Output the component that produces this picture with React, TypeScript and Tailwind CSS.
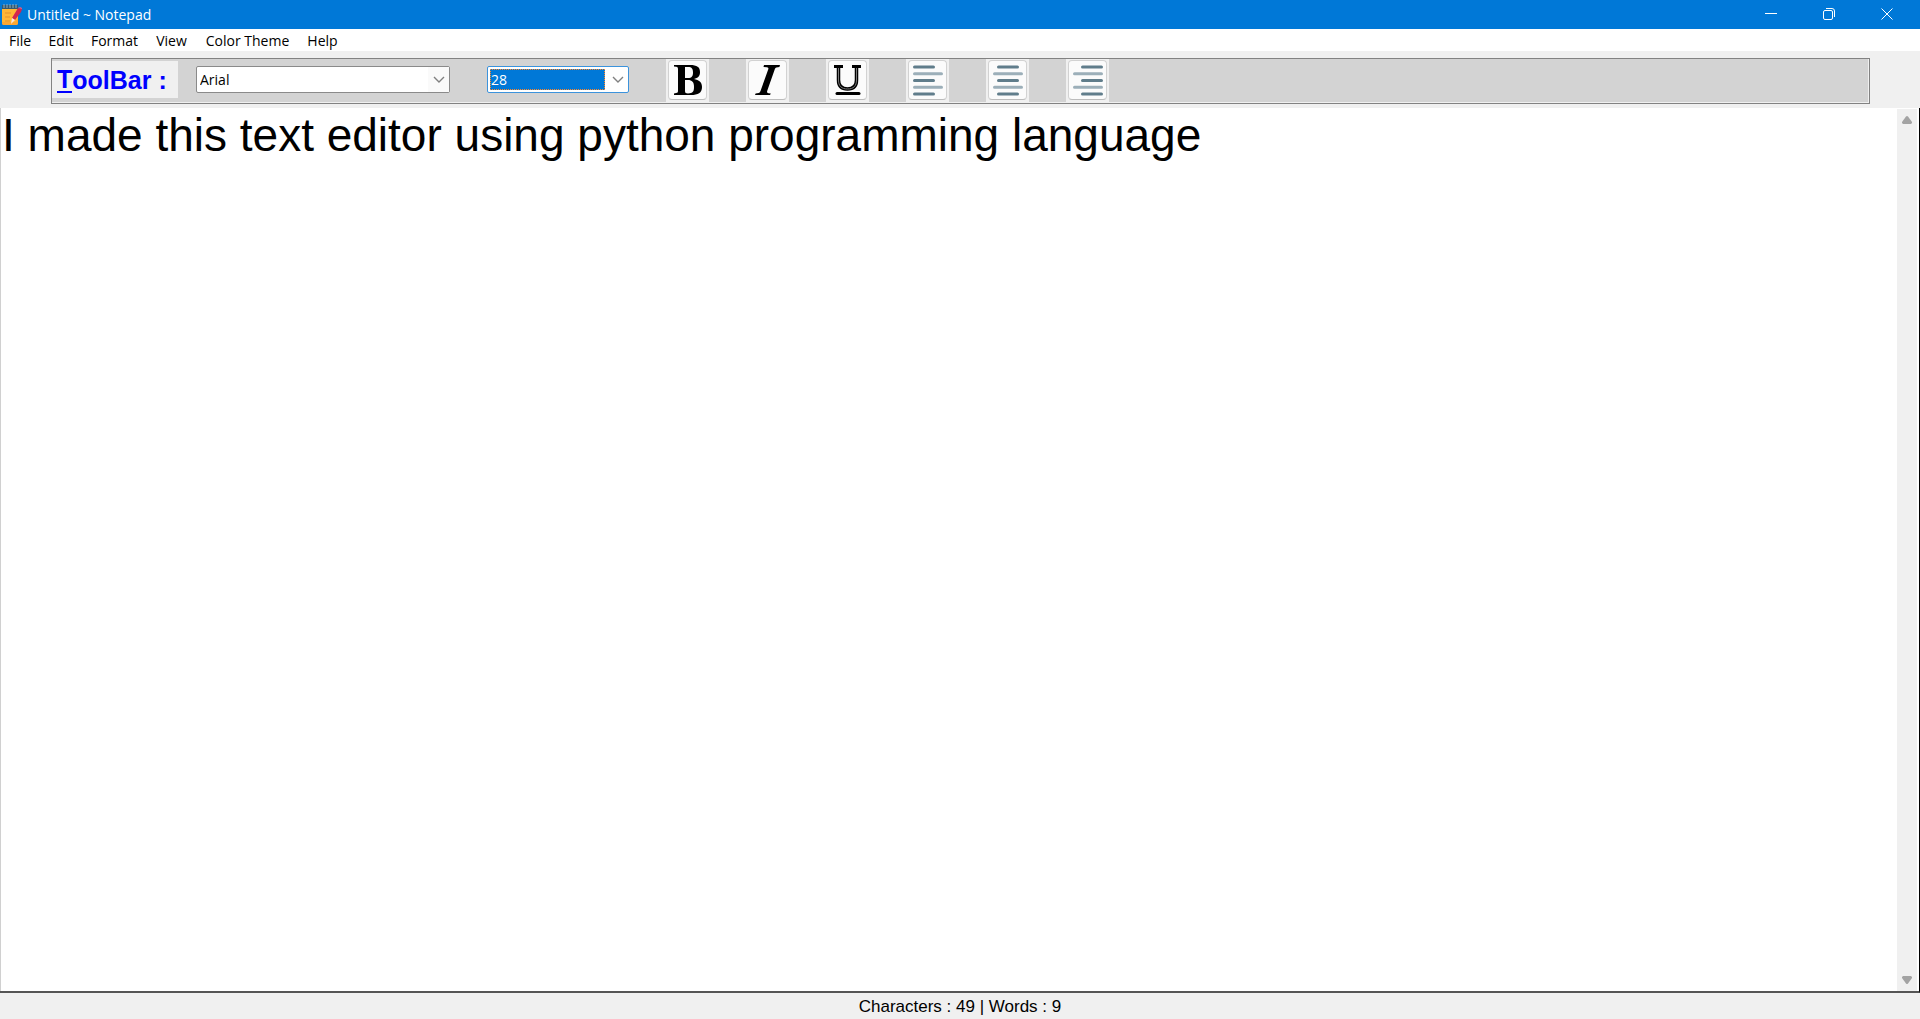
import { useState, type ReactNode } from "react";

const menus = [
  { name: "File", width: "w-10" },
  { name: "Edit", width: "w-[42px]" },
  { name: "Format", width: "w-[65px]" },
  { name: "View", width: "w-[49px]" },
  { name: "Color Theme", width: "w-[103px]" },
  { name: "Help", width: "w-[47px]" },
];

function NotepadIcon() {
  return (
    <svg width="22" height="22" viewBox="0 0 22 22" aria-hidden="true">
      <rect x="1" y="3" width="16" height="18" rx="2" fill="#ffb636" />
      <path d="M1 18h13l3-4v5a2 2 0 0 1-2 2H3a2 2 0 0 1-2-2z" fill="#fba733" />
      <rect x="1" y="1" width="16" height="4" fill="#34586f" />
      <path d="M3 0v4M6 0v4M9 0v4M12 0v4M15 0v4" stroke="#8fb0c4" strokeWidth="1" />
      <path d="M4 9h6M4 13h5M4 17h5" stroke="#e0912f" strokeWidth="1" />
      <path d="M11 14 17 4l4 1-1 3-6 8z" fill="#d3264f" />
      <path d="m17 4 2-1 2 1v1z" fill="#f2587c" />
      <path d="m11 14 3 2-4 4z" fill="#f5e6dc" />
    </svg>
  );
}

function Chevron() {
  return (
    <svg width="12" height="8" viewBox="0 0 12 8" fill="none" stroke="#808080" strokeWidth="1.4" aria-hidden="true">
      <path d="m1 1 5 5 5-5" />
    </svg>
  );
}

function ToolButton({ label, onClick, children }: { label: string; onClick?: () => void; children: ReactNode }) {
  return (
    <button type="button" aria-label={label} onClick={onClick} className="mr-[37px] flex h-[43px] w-[43px] justify-center self-start bg-[#f0f0f0] pt-px">
      <span className="flex h-10 w-[39px] items-center justify-center rounded border border-b-[#bcbcbc] border-[#d2d2d2] bg-[#fbfbfb]">
        {children}
      </span>
    </button>
  );
}

function AlignIcon({ short }: { short: number }) {
  return (
    <svg width="32" height="34" viewBox="0 0 32 34" strokeWidth="3" strokeLinecap="round" aria-hidden="true">
      <path d={`M${short} 4h19M${short} 17.500h19M${short} 31h19`} stroke="#607d8b" />
      <path d="M2.500 10.700h27M2.500 24.300h27" stroke="#9cafb9" />
    </svg>
  );
}

export default function App() {
  const [text, setText] = useState("I made this text editor using python programming language");
  const [font, setFont] = useState("Arial");
  const [size, setSize] = useState("28");
  const characters = text.replace(/\s/g, "").length;
  const words = text.split(/\s+/).filter(Boolean).length;

  return (
    <div className="flex h-screen flex-col overflow-hidden bg-[#f0f0f0] font-['Open_Sans',sans-serif] text-black">
      <header className="flex h-[29px] shrink-0 items-center justify-between bg-[#0078d7] text-white">
        <div className="flex items-center gap-1 pl-px">
          <NotepadIcon />
          <h1 className="text-sm">Untitled ~ Notepad</h1>
        </div>
        <div className="flex h-full pb-px">
          <button type="button" aria-label="Minimize" className="flex w-[58px] items-center justify-center">
            <svg width="12" height="12" viewBox="0 0 12 12" stroke="white"><path d="M0 5.500h12" /></svg>
          </button>
          <button type="button" aria-label="Restore" className="flex w-[58px] items-center justify-center">
            <svg width="12" height="12" viewBox="0 0 12 12" fill="none" stroke="white">
              <rect x=".5" y="2.500" width="9" height="9" rx="1.500" />
              <path d="M3 .5h6a2.500 2.500 0 0 1 2.500 2.500v6" />
            </svg>
          </button>
          <button type="button" aria-label="Close" className="mr-1 flex w-[58px] items-center justify-center">
            <svg width="12" height="12" viewBox="0 0 12 12" stroke="white"><path d="m.5.5 11 11m0-11-11 11" /></svg>
          </button>
        </div>
      </header>

      <nav className="flex h-[22px] shrink-0 bg-white text-sm">
        {menus.map((m) => (
          <button key={m.name} type="button" className={`${m.width} flex items-center justify-center whitespace-nowrap pt-0.5 leading-none`}>
            {m.name}
          </button>
        ))}
      </nav>

      <div className="flex h-[57px] shrink-0 pl-[51px] pr-[50px] pt-[7px]">
        <div className="h-[46px] w-full border border-[#828282] bg-[#f0f0f0] pb-px pr-px">
          <div className="flex h-full items-center bg-[#d3d3d3] pb-0.5" role="toolbar" aria-label="ToolBar">
            <div className="mr-[18px] flex h-[37px] w-[126px] items-center bg-[#f0f0f0] pl-[5px] font-['Liberation_Sans',sans-serif] text-[25px] font-bold text-[#0000ff]">
              <span className="border-b-2 border-[#0000ff] leading-6">T</span>
              <span className="whitespace-pre leading-6">oolBar :</span>
            </div>

            <div className="relative mr-[37px] h-[27px] w-[254px]">
              <select
                aria-label="Font family"
                value={font}
                onChange={(e) => setFont(e.target.value)}
                className="block h-full w-full appearance-none rounded-xs border border-[#8a8a8a] bg-white pl-[3px] text-sm leading-none"
              >
                <option>Arial</option>
                <option>Courier New</option>
                <option>Times New Roman</option>
              </select>
              <span className="pointer-events-none absolute inset-y-px right-px flex w-[21px] items-center justify-center bg-[#fafafa]">
                <Chevron />
              </span>
            </div>

            <div className="relative mr-[37px] h-[27px] w-[142px]">
              <select
                aria-label="Font size"
                value={size}
                onChange={(e) => setSize(e.target.value)}
                className="block h-full w-full appearance-none rounded-xs border border-[#3c93dc] bg-white p-0.5 pr-[23px] text-sm leading-none"
              >
                <option>20</option>
                <option>28</option>
                <option>36</option>
              </select>
              <span className="pointer-events-none absolute inset-y-[3px] left-[3px] right-6 flex items-center border border-dotted border-[#ff8728] bg-[#0078d7] text-sm leading-none text-white">
                {size}
              </span>
              <span className="pointer-events-none absolute inset-y-px right-px flex w-[21px] items-center justify-center">
                <Chevron />
              </span>
            </div>

            <ToolButton label="Bold">
              <svg width="32" height="32" viewBox="0 0 32 32" aria-hidden="true">
                <path fillRule="evenodd" d="M2 1h16c7 0 10 2 10 7 0 4-2 6-6 7 5 1 8 3 8 8 0 6-4 8-11 8H2v-1.500l2-.4c2-.3 2-1 2-3V6c0-2 0-3-2-3.300L2 2.400zM13 3v11h3c4 0 5-2 5-5.500S20 3 16 3zm0 13v11c0 2 1 2.400 3 2.400 5 0 6-2 6-6.400 0-5-2-7-6-7z" />
              </svg>
            </ToolButton>
            <ToolButton label="Italic">
              <svg width="32" height="32" viewBox="0 0 32 32" aria-hidden="true">
                <path d="m12 1 16 0-.6 2-3 .4c-1 .2-1.300 1-1.700 2L15.500 26c-.8 2-.6 3 1 3.200l2.300.4L18 31H3l.6-1.600 3-.4c1-.2 1.600-1 2-2.200L16 6c.8-2 .4-2.400-1-2.700L11.500 3z" />
              </svg>
            </ToolButton>
            <ToolButton label="Underline">
              <svg width="32" height="32" viewBox="0 0 32 32" fill="none" stroke="black" aria-hidden="true">
                <path d="M2 2.500h9M20 2.500h9" strokeWidth="3" />
                <path d="M6.500 3v13c0 6 3 9 9 9s9-3 9-9V3" strokeWidth="3.500" />
                <path d="M6.500 4v12c0 6 3 9 9 9s9-3 9-9V4" stroke="#777777" strokeWidth="1" />
                <path d="M5 29.500h22" strokeWidth="3" strokeLinecap="round" />
              </svg>
            </ToolButton>
            <ToolButton label="Align left"><AlignIcon short={2.5} /></ToolButton>
            <ToolButton label="Align center"><AlignIcon short={6.5} /></ToolButton>
            <ToolButton label="Align right"><AlignIcon short={10.5} /></ToolButton>
          </div>
        </div>
      </div>

      <main className="flex min-h-0 grow border-b-2 border-r border-b-[#555555] border-r-black bg-white">
        <textarea
          aria-label="Document"
          spellCheck={false}
          value={text}
          onChange={(e) => setText(e.target.value)}
          className="grow resize-none overflow-hidden border-l border-[#d0d0d0] pl-px font-['Liberation_Sans',sans-serif] text-[46px] leading-[54px] outline-none"
        />
        <div className="mr-0.5 mt-px flex w-5 flex-col items-center justify-between bg-[#f0f0f0] py-[7px]" aria-hidden="true">
          <svg width="10" height="8" viewBox="0 0 10 8" fill="#a3a3a3"><path d="M4 .5q1-1 2 0L10 6v1L9 8H1L0 7V6z" /></svg>
          <svg width="10" height="8" viewBox="0 0 10 8" fill="#a3a3a3"><path d="M4 7.500q1 1 2 0L10 2V1L9 0H1L0 1v1z" /></svg>
        </div>
      </main>

      <footer className="flex h-[26px] shrink-0 items-center justify-center font-['Liberation_Sans',sans-serif] text-[17px] leading-none">
        Characters : {characters} | Words : {words}
      </footer>
    </div>
  );
}
